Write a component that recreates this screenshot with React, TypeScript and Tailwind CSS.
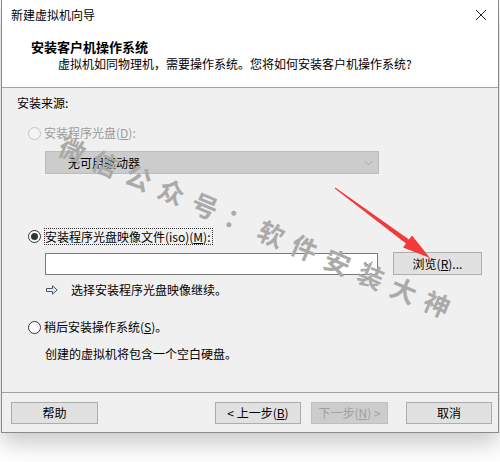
export default function App() {
  const mark = "微信公众号：软件安装大神".split("");
  return (
    <div
      className="relative w-[500px] h-[462px] bg-white overflow-hidden text-[12px] text-black"
      style={{ fontFamily: '"Noto Sans CJK SC", "Noto Sans", sans-serif' }}
    >
      <div className="ml-[1px] w-[498px] h-[433px] border-x border-b border-[#8a8a8a] flex flex-col shadow-[0_10px_22px_rgba(0,0,0,0.22)]">
        {/* title bar */}
        <div className="h-[30px] bg-white flex items-center justify-between pl-[9px] pr-[10px]">
          <span className="leading-4">新建虚拟机向导</span>
          <svg width="12" height="12" viewBox="0 0 12 12" className="mr-[1px]">
            <path d="M1 1L11 11M11 1L1 11" stroke="#222" strokeWidth="1" />
          </svg>
        </div>

        {/* header */}
        <div className="h-[58px] bg-white pl-[29px] pt-[9px] border-b border-[#a0a0a0]">
          <div className="font-bold text-[13px] leading-4">安装客户机操作系统</div>
          <div className="pl-[27px] pt-[1px] leading-4">
            虚拟机如同物理机，需要操作系统。您将如何安装客户机操作系统?
          </div>
        </div>

        {/* body */}
        <div className="flex-1 bg-[#f0f0f0] pl-[15px] pt-[7px] flex flex-col border-b border-[#a0a0a0]">
          <div className="leading-4">安装来源:</div>

          <div className="mt-[14px] ml-[11px] flex items-center h-4 text-[#9b9b9b]">
            <span className="w-[13px] h-[13px] rounded-full border border-[#c4c4c4] bg-[#f4f4f4]" />
            <span className="ml-[3px] leading-4">
              安装程序光盘(<span className="underline">D</span>):
            </span>
          </div>

          <div className="mt-[10px] ml-[28px] w-[334px] h-[23px] bg-[#cccccc] border border-[#bcbcbc] flex items-center justify-between pl-[22px] pr-[5px]">
            <span className="leading-4">无可用驱动器</span>
            <Chevron color="#a8a8a8" />
          </div>

          <div className="mt-[54px] ml-[11px] flex items-center h-4">
            <span className="w-[13px] h-[13px] rounded-full border border-[#333] bg-white flex items-center justify-center">
              <span className="w-[7px] h-[7px] rounded-full bg-[#333]" />
            </span>
            <span className="ml-[3px] leading-[15px] border border-dotted border-[#333] pr-[1px]">
              安装程序光盘映像文件(iso)(<span className="underline">M</span>):
            </span>
          </div>

          <div className="mt-[8px] ml-[28px] flex items-center">
            <div className="w-[333px] h-[22px] bg-white border border-[#7a7a7a] flex items-center justify-end pr-[4px]">
              <Chevron color="#555" />
            </div>
            <button className="ml-[15px] w-[89px] h-[23px] bg-[#e1e1e1] border border-[#adadad] leading-4 pt-[1px]">
              浏览(<span className="underline">R</span>)...
            </button>
          </div>

          <div className="mt-[7px] ml-[29px] flex items-center h-4">
            <svg width="12" height="10" viewBox="0 0 12 10">
              <path
                d="M0.5 3.5H6.5V0.8L11.2 5L6.5 9.2V6.5H0.5Z"
                fill="none"
                stroke="#44546a"
                strokeWidth="1"
              />
            </svg>
            <span className="ml-[13px] leading-4">选择安装程序光盘映像继续。</span>
          </div>

          <div className="mt-[21px] ml-[11px] flex items-center h-4">
            <span className="w-[13px] h-[13px] rounded-full border border-[#333] bg-white" />
            <span className="ml-[3px] leading-4">
              稍后安装操作系统(<span className="underline">S</span>)。
            </span>
          </div>

          <div className="mt-[11px] ml-[28px] leading-4">创建的虚拟机将包含一个空白硬盘。</div>
        </div>

        {/* footer */}
        <div className="h-[39px] bg-[#f0f0f0] flex items-center pl-[9px] pr-[6px]">
          <FooterButton className="w-[87px]">帮助</FooterButton>
          <div className="flex-1" />
          <FooterButton className="w-[86px]">
            &lt; 上一步(<span className="underline">B</span>)
          </FooterButton>
          <FooterButton className="w-[77px] ml-[10px] !bg-[#cccccc] !border-[#bfbfbf] text-[#a0a0a0]">
            下一步(<span className="underline">N</span>) &gt;
          </FooterButton>
          <FooterButton className="w-[86px] ml-[18px]">取消</FooterButton>
        </div>
      </div>

      {/* watermark */}
      <div className="absolute left-[62px] top-[128px] origin-top-left rotate-[23deg] flex text-[26px] font-bold leading-[30px] text-[#aaaaaa] pointer-events-none">
        {mark.map((c, i) => (
          <span key={i} className="w-[36px] text-center">
            {c}
          </span>
        ))}
      </div>

      {/* red arrow */}
      <svg className="absolute left-0 top-0 pointer-events-none" width="500" height="462">
        <polygon
          points="335.3,187.6 409,239.4 412,235.5 430,258 403,247.5 406,243.4 334.7,188.4"
          fill="#f23a3a"
        />
      </svg>
    </div>
  );
}

function Chevron({ color }: { color: string }) {
  return (
    <svg width="9" height="6" viewBox="0 0 9 6">
      <path d="M0.5 0.8L4.5 4.8L8.5 0.8" fill="none" stroke={color} strokeWidth="1" />
    </svg>
  );
}

function FooterButton({
  children,
  className = "",
}: {
  children: React.ReactNode;
  className?: string;
}) {
  return (
    <button
      className={
        "h-[22px] bg-[#e1e1e1] border border-[#adadad] leading-4 flex items-center justify-center " +
        className
      }
    >
      {children}
    </button>
  );
}
